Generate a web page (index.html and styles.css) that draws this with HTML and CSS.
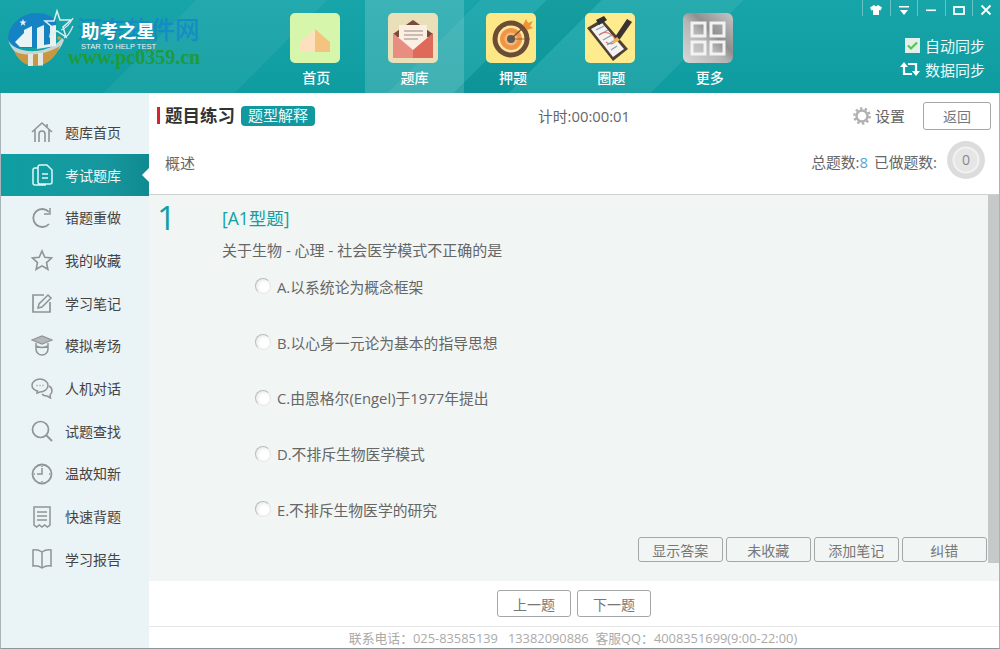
FILE: index.html
```html
<!DOCTYPE html>
<html lang="zh-CN">
<head>
<meta charset="utf-8">
<title>助考之星</title>
<link rel="stylesheet" href="styles.css">
</head>
<body>
<div class="app">
  <header class="top">
    <div class="logo">
      <div class="mark-cn">河东软件网</div>
      <div class="mark-url">www.pc0359.cn</div>
      <svg class="logo-mark" width="78" height="70" viewBox="0 0 78 70">
        <path d="M8 40C8 25 21 13 37 13c8 0 15 3 19 8v27H14z" fill="#1582c4"/>
        <path d="M8 39c2 8 14 13 28 12 10-1 20-5 26-13l2 2c-4 12-14 20-28 20C22 60 11 52 8 39z" fill="#c5d6d6"/>
        <path d="M14 51c6 4 26 7 46-5-4 12-14 20-25 20-10 0-17-6-21-15z" fill="#c8973f"/>
        <path d="M28 54h5v12h-5zM38 53h5v12.500h-5z" fill="#e2e8e4"/>
        <path d="M15 42l9-9v-3l8-4v21H20z" fill="#eaf3f3"/>
        <path d="M23 19l1 2.500h2.500l-2 1.700.8 2.600-2.300-1.500-2.300 1.500.8-2.600-2-1.700H22z" fill="#e6f2f8"/>
        <path d="M37 28l7-3v20l6-1V26l6-1v21l-19 3z" fill="#e9f0f0"/>
        <path d="M57 11l3 9h11l-8 7 3 10-9-6-7 5 2-9-7-6h9z" fill="none" stroke="#dcefef" stroke-width="1.500"/>
        <path d="M73 18c-3 6-7 10-12 12M73 26c-3 7-6 11-9 12" fill="none" stroke="#cfe6f0" stroke-width="1.300"/>
        <circle cx="59" cy="38" r="1.800" fill="#d99a45"/>
      </svg>
      <div class="logo-text">
        <div class="logo-cn">助考之星</div>
        <div class="logo-en">STAR TO HELP TEST</div>
      </div>
    </div>
    <nav class="nav">
      <a class="nav-item">
        <svg class="nav-icon" viewBox="0 0 50 50"><rect width="50" height="50" rx="5" fill="#d6f7ab"/><path d="M10 39V29L25 16v23z" fill="#fde0bd"/><path d="M25 16l15 13v10H25z" fill="#f4c37f"/></svg>
        <span>首页</span>
      </a>
      <a class="nav-item active">
        <svg class="nav-icon" viewBox="0 0 50 50"><rect width="50" height="50" rx="5" fill="#e9dfb8"/><path d="M5 21l20-14 20 14v3H5z" fill="#7a4a3a"/><rect x="11" y="12" width="28" height="25" fill="#fbeee2"/><path d="M16 18h19M16 22h19M16 26h14" stroke="#9a8a80" stroke-width="1.200"/><path d="M5 20l20 17v8H5z" fill="#e88d80"/><path d="M45 20L25 37v8h20z" fill="#df6a5a"/></svg>
        <span>题库</span>
      </a>
      <a class="nav-item">
        <svg class="nav-icon" viewBox="0 0 50 50"><rect width="50" height="50" rx="5" fill="#fde888"/><circle cx="25" cy="26" r="18.500" fill="#6d4c33"/><circle cx="25" cy="26" r="13.500" fill="#fbe9a0"/><circle cx="25" cy="26" r="11" fill="#f19447"/><circle cx="25" cy="26" r="6.500" fill="#f7b96b"/><circle cx="25" cy="26" r="4" fill="#5c5c5c"/><path d="M25 26L42 10" stroke="#6d4c33" stroke-width="1.200"/><path d="M25 26h19" stroke="#6d4c33" stroke-width=".7"/><path d="M37 12l3-6 2 4 5-2-3 5 3 2-6 2z" fill="#ef9238"/></svg>
        <span>押题</span>
      </a>
      <a class="nav-item">
        <svg class="nav-icon" viewBox="0 0 50 50"><rect width="50" height="50" rx="5" fill="#fdeb8e"/><path d="M2 15L17 6l26 30-15 12z" fill="#4f4034"/><path d="M6 16l11-6 22 26-11 8z" fill="#f5f3f0"/><path d="M11 7l8-4 3 4-8 5z" fill="#2f2f2f"/><path d="M11 17l8-4M14 22l9-5M18 27l9-5M22 32l8-5M26 37l6-4" stroke="#8b9fb8" stroke-width="1.300"/><path d="M14 22c5-5 14-2 16 5 1 4-6 5-9 2" fill="none" stroke="#d9736a" stroke-width="1.100"/><path d="M30 24L42 6l5 3-12 17-5 3z" fill="#3a3230"/><path d="M28 27l4-3 3 3-7 4z" fill="#e9b64e"/></svg>
        <span>圈题</span>
      </a>
      <a class="nav-item">
        <svg class="nav-icon" viewBox="0 0 50 50"><defs><linearGradient id="gm" x1="0" y1="1" x2="1" y2="0"><stop offset="0" stop-color="#d8d8d8"/><stop offset=".45" stop-color="#b5b5b5"/><stop offset=".6" stop-color="#8f8f8f"/><stop offset="1" stop-color="#c6c6c6"/></linearGradient></defs><rect width="50" height="50" rx="6" fill="url(#gm)"/><path d="M9 10h13v13H9zM28 10h13v13H28zM9 29h13v12H9zM28 29h13v12H28z" fill="none" stroke="#f2f2f2" stroke-width="3"/></svg>
        <span>更多</span>
      </a>
    </nav>
    <div class="tools">
      <div class="win">
        <span class="win-btn"><svg viewBox="0 0 12 12" width="12" height="12"><path d="M4 1L0 3.500l1.500 3L3 6v5h6V6l1.500.5 1.500-3L8 1 6 2.500z" fill="#fff"/></svg></span>
        <span class="win-btn"><svg viewBox="0 0 12 12" width="12" height="12"><path d="M1 2h10v1.500H1zM2 6h8l-4 5z" fill="#fff"/></svg></span>
        <span class="win-btn"><svg viewBox="0 0 12 12" width="12" height="12"><path d="M1 5.500h10v1.600H1z" fill="#fff"/></svg></span>
        <span class="win-btn"><svg viewBox="0 0 12 12" width="12" height="12"><rect x="1" y="3" width="10" height="7" fill="none" stroke="#fff" stroke-width="1.800"/></svg></span>
        <span class="win-btn"><svg viewBox="0 0 12 12" width="12" height="12"><path d="M1.500 1.500l9 9M10.500 1.500l-9 9" stroke="#fff" stroke-width="1.800"/></svg></span>
      </div>
      <div class="sync">
        <svg class="sync-icon" viewBox="0 0 15 15" width="15" height="15"><rect width="15" height="15" fill="#e4efe9"/><path d="M3 7.500l3 3 6-6" fill="none" stroke="#4ecb4e" stroke-width="2.200"/></svg>
        <span>自动同步</span>
      </div>
      <div class="sync">
        <svg class="sync-icon" viewBox="0 0 20 16" width="20" height="16"><path d="M4 5v8h8M16 11V3H8" fill="none" stroke="#fff" stroke-width="2.200"/><path d="M0 6l4-5 4 5zM12 10l4 5 4-5z" fill="#fff"/></svg>
        <span>数据同步</span>
      </div>
    </div>
  </header>
  <div class="body">
    <aside class="side">
      <a class="side-item"><svg viewBox="0 0 22 22" class="side-icon"><path d="M1 11L11 2l10 9M4 9v12M18 9v12M8 21v-8a3 3 0 0 1 6 0v8M16 3v4" fill="none" stroke="#909495" stroke-width="1.600"/></svg><span>题库首页</span></a>
      <a class="side-item active"><svg viewBox="0 0 22 22" class="side-icon"><path d="M9 1h7l5 5v12a2 2 0 0 1-2 2H9a2 2 0 0 1-2-2V3a2 2 0 0 1 2-2zM7 4H4a2 2 0 0 0-2 2v13a2 2 0 0 0 2 2h11M11 10h6M11 14h6" fill="none" stroke="#dff6f6" stroke-width="1.500"/></svg><span>考试题库</span></a>
      <a class="side-item"><svg viewBox="0 0 22 22" class="side-icon"><path d="M18 17a9 9 0 1 1 0-12" fill="none" stroke="#909495" stroke-width="1.800"/><path d="M19 1v6h-6" fill="none" stroke="#909495" stroke-width="1.500"/></svg><span>错题重做</span></a>
      <a class="side-item"><svg viewBox="0 0 22 22" class="side-icon"><path d="M11 2l2.800 6.300 6.700.7-5 4.600 1.400 6.700-5.900-3.400-5.900 3.400 1.400-6.700-5-4.600 6.700-.7z" fill="none" stroke="#909495" stroke-width="1.600"/></svg><span>我的收藏</span></a>
      <a class="side-item"><svg viewBox="0 0 22 22" class="side-icon"><path d="M19 10v10H2V3h11" fill="none" stroke="#909495" stroke-width="1.700"/><path d="M7 16l1-4 9-9 3 3-9 9z" fill="none" stroke="#909495" stroke-width="1.500"/></svg><span>学习笔记</span></a>
      <a class="side-item"><svg viewBox="0 0 22 22" class="side-icon"><path d="M1 5l10-4 10 4-10 4z" fill="#b4b8b9" stroke="#909495" stroke-width="1.200"/><path d="M5 8v6a6 6 0 0 0 12 0V8M5 11c4 2 8 2 12 0" fill="none" stroke="#909495" stroke-width="1.500"/></svg><span>模拟考场</span></a>
      <a class="side-item"><svg viewBox="0 0 22 22" class="side-icon"><path d="M9 2c4 0 8 3 8 6.500S13 15 9 15l-3 1 .5-2C3 13 1 11 1 8.500 1 5 5 2 9 2z" fill="none" stroke="#909495" stroke-width="1.500"/><path d="M18 9c2 1 3 3 3 5s-1 3-2 4l.5 3-3.500-2c-2 0-4-.5-5-2" fill="none" stroke="#909495" stroke-width="1.500"/><path d="M5.500 8.500h1M8.500 8.500h1M11.500 8.500h1" stroke="#909495" stroke-width="1.500"/></svg><span>人机对话</span></a>
      <a class="side-item"><svg viewBox="0 0 22 22" class="side-icon"><circle cx="9.500" cy="9.500" r="8" fill="none" stroke="#909495" stroke-width="1.700"/><path d="M15 15l6 6" stroke="#909495" stroke-width="1.800"/></svg><span>试题查找</span></a>
      <a class="side-item"><svg viewBox="0 0 22 22" class="side-icon"><circle cx="11" cy="11" r="9.500" fill="none" stroke="#909495" stroke-width="1.800"/><path d="M11 5v6H6M11 3v1M11 18v1M3 11h1M18 11h1" fill="none" stroke="#909495" stroke-width="1.500"/></svg><span>温故知新</span></a>
      <a class="side-item"><svg viewBox="0 0 22 22" class="side-icon"><path d="M3 1h16v18l-2.700 2-2.600-2-2.700 2-2.700-2-2.600 2-2.700-2z" fill="none" stroke="#909495" stroke-width="1.500"/><path d="M6 6h10M6 10h10M6 14h10" stroke="#909495" stroke-width="1.400"/></svg><span>快速背题</span></a>
      <a class="side-item"><svg viewBox="0 0 22 22" class="side-icon"><path d="M2 2c3-.5 6 0 9 2 3-2 6-2.500 9-2v16c-3-.5-6 0-9 2-3-2-6-2.500-9-2zM11 4v16" fill="none" stroke="#909495" stroke-width="1.500"/></svg><span>学习报告</span></a>
    </aside>
    <main class="main">
      <div class="head-a">
        <div class="title-wrap">
          <h1 class="title">题目练习</h1>
          <span class="badge">题型解释</span>
        </div>
        <div class="timer">计时:00:00:01</div>
        <div class="head-right">
          <svg class="gear" viewBox="0 0 18 18" width="18" height="18"><circle cx="9" cy="9" r="5.500" fill="none" stroke="#b0b0b0" stroke-width="2.400"/><circle cx="9" cy="9" r="7.600" fill="none" stroke="#b0b0b0" stroke-width="2.400" stroke-dasharray="2.400 2.400"/></svg>
          <span class="setting">设置</span>
          <button class="btn back">返回</button>
        </div>
      </div>
      <div class="head-b">
        <span class="overview">概述</span>
        <div class="stats">
          <span class="stat">总题数:<em>8</em></span>
          <span class="stat">已做题数:</span>
          <span class="done"><span>0</span></span>
        </div>
      </div>
      <div class="content">
        <div class="question">
          <div class="q-no">1</div>
          <div class="q-body">
            <div class="q-type">[A1型题]</div>
            <div class="q-text">关于生物 - 心理 - 社会医学模式不正确的是</div>
            <ul class="opts">
              <li class="opt"><i class="radio"></i>A.以系统论为概念框架</li>
              <li class="opt"><i class="radio"></i>B.以心身一元论为基本的指导思想</li>
              <li class="opt"><i class="radio"></i>C.由恩格尔(Engel)于1977年提出</li>
              <li class="opt"><i class="radio"></i>D.不排斥生物医学模式</li>
              <li class="opt"><i class="radio"></i>E.不排斥生物医学的研究</li>
            </ul>
          </div>
          <div class="actions">
            <button class="btn act">显示答案</button>
            <button class="btn act">未收藏</button>
            <button class="btn act">添加笔记</button>
            <button class="btn act">纠错</button>
          </div>
        </div>
        <div class="scroll"><div class="thumb"></div></div>
      </div>
      <div class="pager">
        <button class="btn page">上一题</button>
        <button class="btn page">下一题</button>
      </div>
      <footer class="foot">联系电话：025-83585139&nbsp;&nbsp;&nbsp;13382090886&nbsp;&nbsp;客服QQ：4008351699(9:00-22:00)</footer>
    </main>
  </div>
</div>
</body>
</html>
```
FILE: styles.css
```css
* { box-sizing: border-box; }
html, body { margin: 0; padding: 0; }
body {
  width: 1000px;
  height: 649px;
  overflow: hidden;
  font-family: "Open Sans", "Noto Sans CJK SC", sans-serif;
  font-size: 15px;
  color: #555;
  background: #fff;
}
.app { width: 1000px; height: 649px; display: flex; flex-direction: column; }

/* top bar */
.top {
  height: 93px;
  flex: none;
  display: flex;
  color: #fff;
  background:
    linear-gradient(135deg, rgba(255,255,255,0) 18%, rgba(255,255,255,.05) 18%, rgba(255,255,255,.05) 30%, rgba(255,255,255,0) 30%, rgba(255,255,255,0) 44%, rgba(255,255,255,.06) 44%, rgba(255,255,255,.06) 50%, rgba(0,0,0,.05) 50%, rgba(0,0,0,.05) 55%, rgba(255,255,255,.07) 55%, rgba(255,255,255,.07) 68%, rgba(255,255,255,0) 68%),
    linear-gradient(180deg, #17a5a9 0%, #0e9ca0 100%);
}
.logo { width: 267px; flex: none; position: relative; display: flex; align-items: flex-start; }
.logo-mark { flex: none; margin-right: 3px; position: relative; }
.logo-text { padding-top: 20px; position: relative; }
.logo-cn { font-size: 18.500px; line-height: 22px; font-weight: 700; color: #fff; white-space: nowrap; }
.logo-en { font-size: 7.600px; line-height: 9px; color: #eef; white-space: nowrap; font-family: "Liberation Sans", sans-serif; }
.mark-cn {
  position: absolute; left: 77px; top: 15px;
  font-size: 24.500px; line-height: 30px; font-weight: 500;
  color: rgba(20,130,210,.75); white-space: nowrap;
}
.mark-url {
  position: absolute; left: 68px; top: 47px;
  font-family: "Liberation Serif", serif; font-size: 20px; line-height: 20px; font-weight: 700;
  color: #1f9a3c; white-space: nowrap;
}

.nav { display: flex; flex: none; width: 492px; }
.nav-item {
  width: 98.400px;
  padding-top: 13px;
  display: flex;
  flex-direction: column;
  align-items: center;
  font-size: 14px;
  font-weight: 500;
}
.nav-item span { line-height: 20px; margin-top: 5px; }
.nav-item.active { background: rgba(255,255,255,.16); }
.nav-icon { width: 50px; height: 50px; display: block; margin-right: 3px; }

.tools { flex: 1; display: flex; flex-direction: column; align-items: flex-end; }
.win { display: flex; height: 20px; margin-bottom: 13px; padding-right: .5px; }
.win-btn {
  width: 27.500px; height: 16px;
  display: flex; align-items: flex-end; justify-content: center;
  border-left: 1px solid rgba(255,255,255,.35);
}
.sync { display: flex; align-items: center; justify-content: flex-end; height: 24px; padding-right: 15px; font-size: 15px; color: #eefafa; }
.sync span { margin-left: 5px; }

/* layout */
.body { flex: 1; display: flex; min-height: 0; border-left: 1px solid #a9b4b8; border-right: 1px solid #a9b4b8; border-bottom: 1px solid #8f9698; }
.side { width: 148px; flex: none; padding-top: 18px; background: #eaf3f6; }
.side-item {
  height: 42.700px;
  display: flex;
  align-items: center;
  padding-left: 30px;
  color: #444;
  font-size: 14px;
  position: relative;
}
.side-item span { margin: 0 0 1px 12px; }
.side-icon { width: 22px; height: 22px; flex: none; }
.side-item.active { color: #eefafa; background: linear-gradient(90deg, #0f9fa3, #16979d 70%, #0f8a90); }
.side-item.active::after {
  content: "";
  position: absolute;
  right: 0; top: 14px;
  border: 7px solid transparent;
  border-left: 0;
  border-right-color: #fff;
}

.main { flex: 1; min-width: 0; display: flex; flex-direction: column; }
.head-a { height: 45px; flex: none; display: flex; align-items: center; padding: 0 8px 0 8px; }
.title-wrap { display: flex; align-items: center; width: 381px; flex: none; }
.title {
  margin: 0;
  font-size: 17.500px; line-height: 17px; font-weight: 700; color: #333;
  border-left: 3px solid #d8232a;
  padding-left: 5px;
}
.badge {
  margin-left: 6px;
  width: 74px; height: 20px;
  line-height: 19px;
  text-align: center;
  font-size: 15px;
  color: #eefafa;
  background: #12989f;
  border-radius: 4px;
}
.timer { font-size: 14.800px; color: #666; }
.head-right { margin-left: auto; display: flex; align-items: center; }
.gear { flex: none; }
.setting { margin: 0 18px 0 4px; color: #666; font-size: 15px; }
.btn {
  font-family: inherit;
  background: transparent;
  color: #777;
  border: 1px solid #a3a7a7;
  border-radius: 3px;
  padding: 0;
  font-size: 14px;
}
.back { width: 68px; height: 28px; }
.head-b { height: 57px; flex: none; display: flex; align-items: flex-start; padding: 0 14px 0 16px; border-bottom: 1px solid #ccd0d0; }
.overview { margin-top: 15px; color: #666; line-height: 20px; }
.stats { margin-left: auto; display: flex; align-items: center; gap: 6px; color: #666; margin-top: 3px; height: 38px; font-size: 14.800px; }
.stat { margin-top: 3px; }
.stats em { font-style: normal; color: #4fa8d8; }
.done {
  width: 38px; height: 38px; margin-left: 4px; border-radius: 50%;
  background: radial-gradient(circle, #e6e6e6 0 11px, #f2f2f2 12px 13px, #dcdcdc 14px);
  display: flex; align-items: center; justify-content: center;
  color: #888; font-size: 14px; line-height: 38px;
}

.content { flex: 1; min-height: 0; display: flex; background: #f1f5f4; }
.question { flex: 1; min-width: 0; position: relative; display: flex; padding-left: 8px; }
.q-no { width: 65px; flex: none; font-size: 33px; line-height: 46px; color: #139ea3; font-weight: 400; }
.q-body { flex: 1; padding-top: 11px; }
.q-type { font-size: 17.500px; line-height: 24px; color: #139ea3; }
.q-text { margin-top: 8px; line-height: 24px; font-size: 15px; color: #666; }
.opts { list-style: none; margin: -3.500px 0 0; padding: 0 0 0 33px; }
.opt { height: 55.750px; display: flex; align-items: center; font-size: 14.800px; color: #666; }
.radio {
  width: 16px; height: 16px; margin-right: 6px; border-radius: 50%; flex: none;
  background: radial-gradient(circle at 60% 60%, #fff 0 4px, #eef0f0 8px);
  border: 1px solid #bcbcbc;
  border-right-color: #e8e8e8; border-bottom-color: #e8e8e8;
}
.actions { position: absolute; right: 1px; bottom: 19px; display: flex; gap: 2.500px; }
.act { width: 85.500px; height: 25px; }

.scroll { width: 11px; flex: none; background: #f1f5f4; }
.thumb { height: 368px; background: #c5c9c9; }

.pager { height: 45px; flex: none; display: flex; justify-content: center; align-items: flex-start; padding-top: 9px; gap: 6px; }
.page { width: 74px; height: 27px; }
.foot {
  height: 22px; flex: none;
  border-top: 1px solid #e6e6e6;
  text-align: center;
  font-size: 12.850px; line-height: 22px;
  color: #aaa;
  white-space: nowrap;
  padding-right: 2px;
}
```
